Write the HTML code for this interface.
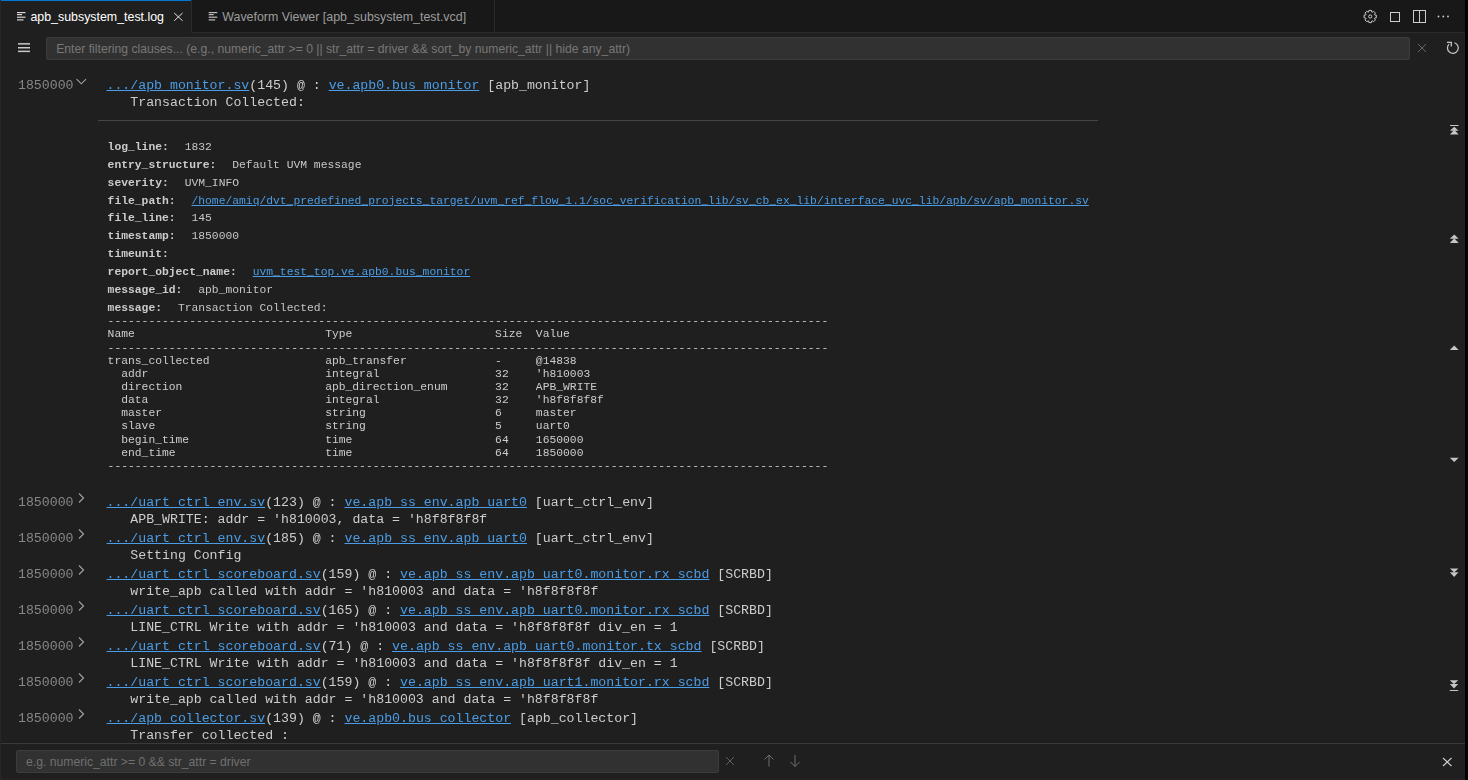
<!DOCTYPE html>
<html><head><meta charset="utf-8">
<style>
html,body{margin:0;padding:0;}
body{width:1468px;height:780px;overflow:hidden;background:#1f1f1f;position:relative;font-family:"Liberation Sans",sans-serif;}
.abs{position:absolute;}
#tabbar{left:0;top:0;width:1468px;height:32px;background:#181818;}
#tabline{left:191px;top:32px;width:1274px;height:1px;background:#2b2b2b;}
#tab1{left:0;top:0;width:191px;height:33px;background:#1f1f1f;}
#tab1top{left:0;top:0;width:191px;height:1px;background:#0078d4;}
#tab1r{left:191px;top:0;width:1px;height:32px;background:#2b2b2b;}
#tab2r{left:494px;top:0;width:1px;height:32px;background:#2b2b2b;}
.tabtxt{font-size:12.4px;white-space:pre;line-height:15px;}
#leftedge{left:0;top:0;width:1px;height:780px;background:#262626;}
#rightedge{left:1465px;top:0;width:3px;height:780px;background:#000;}
.inp{background:#313131;border:1px solid #3c3c3c;border-radius:2px;box-sizing:border-box;}
.ph{font-size:12.2px;color:#8b8b8b;white-space:pre;line-height:15px;}
.mono{font-family:"Liberation Mono",monospace;white-space:pre;}
.ml{font-size:13.23px;line-height:18px;height:18px;color:#cccccc;}
.ts{color:#868686;}
a,.lk{color:#4a9de6;text-decoration:underline;}
.det{font-size:11.33px;line-height:17.87px;color:#cccccc;}
.det b{font-weight:bold;}
.det .v{margin-left:15.9px;color:#c6c6c6;}
.tbl{font-size:11.33px;line-height:13.14px;color:#cccccc;margin:0;}
</style></head><body>
<div id="tabbar" class="abs"></div>
<div id="tabline" class="abs"></div>
<div id="tab1" class="abs"></div>
<div id="tab1top" class="abs"></div>
<div id="tab1r" class="abs"></div>
<div id="tab2r" class="abs"></div>
<!-- tab icons -->
<svg class="abs" style="left:0;top:0" width="500" height="32">
  <g fill="#d4d4d4">
    <rect x="17" y="12" width="8.5" height="1.2"/>
    <rect x="17" y="14" width="5" height="1.2"/>
    <rect x="17" y="16.6" width="8.5" height="1.2"/>
    <rect x="17" y="19.3" width="6.5" height="1.2"/>
  </g>
  <g fill="#bdbdbd">
    <rect x="208.7" y="12" width="8.6" height="1.2"/>
    <rect x="208.7" y="14" width="5" height="1.2"/>
    <rect x="208.7" y="16.6" width="8.6" height="1.2"/>
    <rect x="208.7" y="19.3" width="6.5" height="1.2"/>
  </g>
  <g stroke="#e0e0e0" stroke-width="1">
    <line x1="174.2" y1="13" x2="182.6" y2="20.8"/>
    <line x1="182.6" y1="13" x2="174.2" y2="20.8"/>
  </g>
</svg>
<div class="abs tabtxt" style="left:30.4px;top:9.5px;color:#ffffff">apb_subsystem_test.log</div>
<div class="abs tabtxt" style="left:222.3px;top:9.5px;color:#9d9d9d">Waveform Viewer [apb_subsystem_test.vcd]</div>
<!-- top right icons -->
<svg class="abs" style="left:1355px;top:0" width="110" height="32" fill="none" stroke="#cccccc" stroke-width="1">
  <g transform="translate(15.2,16.5)">
    <path d="M-1.53,-4.44 L-1.30,-6.11 L1.30,-6.11 L1.53,-4.44 L2.06,-4.22 L3.40,-5.24 L5.24,-3.40 L4.22,-2.06 L4.44,-1.53 L6.11,-1.30 L6.11,1.30 L4.44,1.53 L4.22,2.06 L5.24,3.40 L3.40,5.24 L2.06,4.22 L1.53,4.44 L1.30,6.11 L-1.30,6.11 L-1.53,4.44 L-2.06,4.22 L-3.40,5.24 L-5.24,3.40 L-4.22,2.06 L-4.44,1.53 L-6.11,1.30 L-6.11,-1.30 L-4.44,-1.53 L-4.22,-2.06 L-5.24,-3.40 L-3.40,-5.24 L-2.06,-4.22Z" stroke-linejoin="round"/>
    <circle cx="0" cy="0" r="1.6"/>
  </g>
  <rect x="35.5" y="12.5" width="9" height="9"/>
  <rect x="58.5" y="10.5" width="12" height="12"/>
  <line x1="64.5" y1="10.5" x2="64.5" y2="22.5"/>
  <g fill="#cccccc" stroke="none">
    <circle cx="83.5" cy="16.5" r="0.9"/>
    <circle cx="88.3" cy="16.5" r="0.9"/>
    <circle cx="93" cy="16.5" r="0.9"/>
  </g>
</svg>
<!-- filter bar -->
<svg class="abs" style="left:0;top:33px" width="46" height="30">
  <g fill="#c8c8c8"><rect x="18" y="10.1" width="12" height="1.5"/><rect x="18" y="14" width="12" height="1.5"/><rect x="18" y="17.6" width="12" height="1.5"/></g>
</svg>
<div class="abs inp" style="left:46px;top:37px;width:1364px;height:23px;"></div>
<div class="abs ph" style="left:56.2px;top:41.8px;color:#777777">Enter filtering clauses... (e.g., numeric_attr &gt;= 0 || str_attr = driver &amp;&amp; sort_by numeric_attr || hide any_attr)</div>
<svg class="abs" style="left:1400px;top:33px" width="65" height="30">
  <g stroke="#676767" stroke-width="1"><line x1="18" y1="11" x2="26" y2="19"/><line x1="26" y1="11" x2="18" y2="19"/></g>
  <path d="M54.4,9.75 A5.4,5.4 0 1 1 49.08,11.08" fill="none" stroke="#c5c5c5" stroke-width="1.25"/>
  <path d="M47,9.4 L51.3,9.4 L51.3,13.4" fill="none" stroke="#c5c5c5" stroke-width="1.3"/>
</svg>

<div id="logwrap" style="position:absolute;left:0;top:0;width:1465px;height:743px;overflow:hidden;will-change:transform">
<!--LOG-->
<div class="abs mono ml ts" style="left:18px;top:77.40px">1850000</div>
<svg class="abs chev" style="left:75px;top:78.30px" width="12" height="8"><path d="M1.6,1.2 L6.3,5.8 L11,1.2" fill="none" stroke="#a0a0a0" stroke-width="1.15"/></svg>
<div class="abs mono ml" style="left:106.5px;top:77.40px"><span class="lk">.../apb_monitor.sv</span>(145) @ : <span class="lk">ve.apb0.bus_monitor</span> [apb_monitor]</div>
<div class="abs mono ml" style="left:106.5px;top:94.40px">   Transaction Collected:</div>
<div class="abs" style="left:98px;top:120px;width:1000px;height:1px;background:#454545"></div>
<div class="abs mono det" style="left:107.6px;top:139.00px"><b>log_line:</b><span class="v">1832</span></div>
<div class="abs mono det" style="left:107.6px;top:156.87px"><b>entry_structure:</b><span class="v">Default UVM message</span></div>
<div class="abs mono det" style="left:107.6px;top:174.74px"><b>severity:</b><span class="v">UVM_INFO</span></div>
<div class="abs mono det" style="left:107.6px;top:192.61px"><b>file_path:</b><span class="v"><span class="lk">/home/amiq/dvt_predefined_projects_target/uvm_ref_flow_1.1/soc_verification_lib/sv_cb_ex_lib/interface_uvc_lib/apb/sv/apb_monitor.sv</span></span></div>
<div class="abs mono det" style="left:107.6px;top:210.48px"><b>file_line:</b><span class="v">145</span></div>
<div class="abs mono det" style="left:107.6px;top:228.35px"><b>timestamp:</b><span class="v">1850000</span></div>
<div class="abs mono det" style="left:107.6px;top:246.22px"><b>timeunit:</b><span class="v"></span></div>
<div class="abs mono det" style="left:107.6px;top:264.09px"><b>report_object_name:</b><span class="v"><span class="lk">uvm_test_top.ve.apb0.bus_monitor</span></span></div>
<div class="abs mono det" style="left:107.6px;top:281.96px"><b>message_id:</b><span class="v">apb_monitor</span></div>
<div class="abs mono det" style="left:107.6px;top:299.83px"><b>message:</b><span class="v">Transaction Collected:</span></div>
<pre class="abs mono tbl" style="left:107.6px;top:315.30px">----------------------------------------------------------------------------------------------------------
Name                            Type                     Size  Value
----------------------------------------------------------------------------------------------------------
trans_collected                 apb_transfer             -     @14838
  addr                          integral                 32    'h810003
  direction                     apb_direction_enum       32    APB_WRITE
  data                          integral                 32    'h8f8f8f8f
  master                        string                   6     master
  slave                         string                   5     uart0
  begin_time                    time                     64    1650000
  end_time                      time                     64    1850000
----------------------------------------------------------------------------------------------------------</pre>
<div class="abs mono ml ts" style="left:18px;top:494.40px">1850000</div>
<svg class="abs chev" style="left:77px;top:492px" width="8" height="12"><path d="M2,1.5 L6.5,6 L2,10.5" fill="none" stroke="#a0a0a0" stroke-width="1.15"/></svg>
<div class="abs mono ml" style="left:106.5px;top:494.40px"><span class="lk">.../uart_ctrl_env.sv</span>(123) @ : <span class="lk">ve.apb_ss_env.apb_uart0</span> [uart_ctrl_env]</div>
<div class="abs mono ml" style="left:106.5px;top:511.40px">   APB_WRITE: addr = 'h810003, data = 'h8f8f8f8f</div>
<div class="abs mono ml ts" style="left:18px;top:530.40px">1850000</div>
<svg class="abs chev" style="left:77px;top:528px" width="8" height="12"><path d="M2,1.5 L6.5,6 L2,10.5" fill="none" stroke="#a0a0a0" stroke-width="1.15"/></svg>
<div class="abs mono ml" style="left:106.5px;top:530.40px"><span class="lk">.../uart_ctrl_env.sv</span>(185) @ : <span class="lk">ve.apb_ss_env.apb_uart0</span> [uart_ctrl_env]</div>
<div class="abs mono ml" style="left:106.5px;top:547.40px">   Setting Config</div>
<div class="abs mono ml ts" style="left:18px;top:566.40px">1850000</div>
<svg class="abs chev" style="left:77px;top:564px" width="8" height="12"><path d="M2,1.5 L6.5,6 L2,10.5" fill="none" stroke="#a0a0a0" stroke-width="1.15"/></svg>
<div class="abs mono ml" style="left:106.5px;top:566.40px"><span class="lk">.../uart_ctrl_scoreboard.sv</span>(159) @ : <span class="lk">ve.apb_ss_env.apb_uart0.monitor.rx_scbd</span> [SCRBD]</div>
<div class="abs mono ml" style="left:106.5px;top:583.40px">   write_apb called with addr = 'h810003 and data = 'h8f8f8f8f</div>
<div class="abs mono ml ts" style="left:18px;top:602.40px">1850000</div>
<svg class="abs chev" style="left:77px;top:600px" width="8" height="12"><path d="M2,1.5 L6.5,6 L2,10.5" fill="none" stroke="#a0a0a0" stroke-width="1.15"/></svg>
<div class="abs mono ml" style="left:106.5px;top:602.40px"><span class="lk">.../uart_ctrl_scoreboard.sv</span>(165) @ : <span class="lk">ve.apb_ss_env.apb_uart0.monitor.rx_scbd</span> [SCRBD]</div>
<div class="abs mono ml" style="left:106.5px;top:619.40px">   LINE_CTRL Write with addr = 'h810003 and data = 'h8f8f8f8f div_en = 1</div>
<div class="abs mono ml ts" style="left:18px;top:638.40px">1850000</div>
<svg class="abs chev" style="left:77px;top:636px" width="8" height="12"><path d="M2,1.5 L6.5,6 L2,10.5" fill="none" stroke="#a0a0a0" stroke-width="1.15"/></svg>
<div class="abs mono ml" style="left:106.5px;top:638.40px"><span class="lk">.../uart_ctrl_scoreboard.sv</span>(71) @ : <span class="lk">ve.apb_ss_env.apb_uart0.monitor.tx_scbd</span> [SCRBD]</div>
<div class="abs mono ml" style="left:106.5px;top:655.40px">   LINE_CTRL Write with addr = 'h810003 and data = 'h8f8f8f8f div_en = 1</div>
<div class="abs mono ml ts" style="left:18px;top:674.40px">1850000</div>
<svg class="abs chev" style="left:77px;top:672px" width="8" height="12"><path d="M2,1.5 L6.5,6 L2,10.5" fill="none" stroke="#a0a0a0" stroke-width="1.15"/></svg>
<div class="abs mono ml" style="left:106.5px;top:674.40px"><span class="lk">.../uart_ctrl_scoreboard.sv</span>(159) @ : <span class="lk">ve.apb_ss_env.apb_uart1.monitor.rx_scbd</span> [SCRBD]</div>
<div class="abs mono ml" style="left:106.5px;top:691.40px">   write_apb called with addr = 'h810003 and data = 'h8f8f8f8f</div>
<div class="abs mono ml ts" style="left:18px;top:710.40px">1850000</div>
<svg class="abs chev" style="left:77px;top:708px" width="8" height="12"><path d="M2,1.5 L6.5,6 L2,10.5" fill="none" stroke="#a0a0a0" stroke-width="1.15"/></svg>
<div class="abs mono ml" style="left:106.5px;top:710.40px"><span class="lk">.../apb_collector.sv</span>(139) @ : <span class="lk">ve.apb0.bus_collector</span> [apb_collector]</div>
<div class="abs mono ml" style="left:106.5px;top:727.40px">   Transfer collected :</div>
<!--/LOG-->
</div>

<!-- right nav -->
<svg class="abs" style="left:1440px;top:110px" width="25" height="600">
  <g fill="#c6c6c6">
    <rect x="10" y="15" width="8.5" height="1"/>
    <polygon points="14.25,16.8 18.6,20.8 9.9,20.8"/>
    <polygon points="14.25,19.8 18.6,24.5 9.9,24.5"/>
    <polygon points="14.25,124.4 18.7,128.8 9.8,128.8"/>
    <polygon points="14.25,128.2 18.7,132.9 9.8,132.9"/>
    <polygon points="14.25,235.4 18.6,240 9.8,240"/>
    <polygon points="9.8,347.7 18.6,347.7 14.25,351.9"/>
    <polygon points="9.9,458.5 18.4,458.5 14.15,462.5"/>
    <polygon points="9.9,462.2 18.4,462.2 14.15,467"/>
    <polygon points="9.8,570.3 18.2,570.3 14,574.3"/>
    <polygon points="9.8,574 18.2,574 14,578.5"/>
    <rect x="9.8" y="580" width="8.4" height="1"/>
  </g>
</svg>
<!-- bottom find bar -->
<div class="abs" style="left:0;top:743px;width:1465px;height:1px;background:#3a3a3a"></div>
<div class="abs inp" style="left:16px;top:750px;width:703px;height:23px;"></div>
<div class="abs ph" style="left:26px;top:754.5px;color:#707070">e.g. numeric_attr &gt;= 0 &amp;&amp; str_attr = driver</div>
<svg class="abs" style="left:700px;top:745px" width="110" height="30">
  <g stroke="#5f5f5f" stroke-width="1"><line x1="26" y1="12" x2="34" y2="20"/><line x1="34" y1="12" x2="26" y2="20"/></g>
  <g stroke="#6e6e6e" stroke-width="1" fill="none">
    <path d="M69,10 L69,21.5 M64.5,14.5 L69,10 L73.5,14.5"/>
    <path d="M95,10 L95,21.5 M90.5,17 L95,21.5 L99.5,17"/>
  </g>
</svg>
<svg class="abs" style="left:1436px;top:750px" width="22" height="22">
  <g stroke="#d0d0d0" stroke-width="1.05"><line x1="7" y1="8" x2="15.5" y2="16"/><line x1="15.5" y1="8" x2="7" y2="16"/></g>
</svg>
<div class="abs" style="left:0;top:778px;width:1465px;height:2px;background:#232323"></div>
<div id="leftedge" class="abs"></div>
<div id="rightedge" class="abs"></div>
</body></html>
